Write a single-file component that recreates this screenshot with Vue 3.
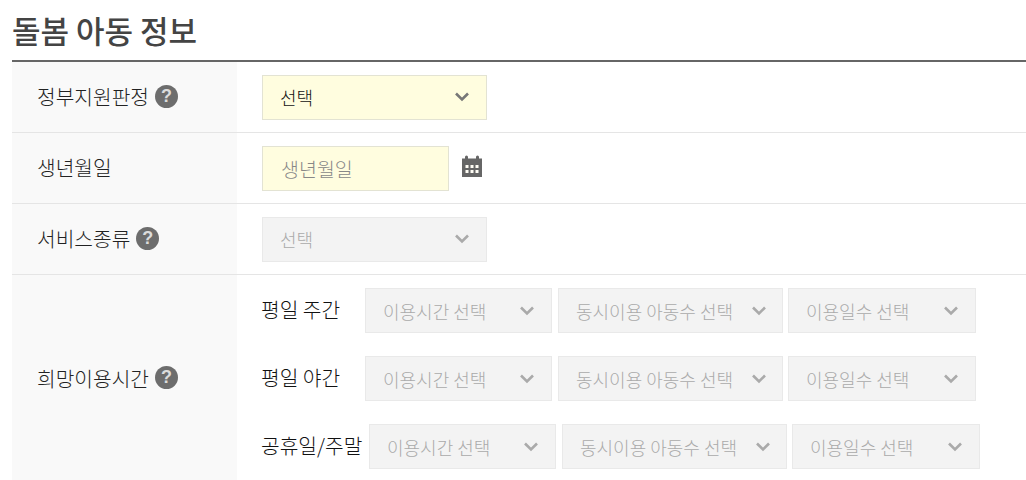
<script setup>
const times = [
  { label: '평일 주간' },
  { label: '평일 야간' },
  { label: '공휴일/주말', wide: true },
]

const selects = [
  { text: '이용시간 선택', size: 'sm' },
  { text: '동시이용 아동수 선택', size: 'lg' },
  { text: '이용일수 선택', size: 'md' },
]
</script>

<template>
  <main class="page">
    <h2 class="title">돌봄 아동 정보</h2>

    <section class="form">
      <div class="row">
        <div class="head">
          <span>정부지원판정</span>
          <i class="help">?</i>
        </div>
        <div class="body">
          <div class="select required big">
            <span>선택</span>
            <svg class="arrow" viewBox="0 0 14 10"><path d="M1 1.500 7 7.500 13 1.500" /></svg>
          </div>
        </div>
      </div>

      <div class="row">
        <div class="head">
          <span>생년월일</span>
        </div>
        <div class="body birth">
          <div class="date">생년월일</div>
          <svg class="calendar" viewBox="0 0 20 22">
            <path d="M0 3.500h3V2a1.500 1.500 0 0 1 3 0v1.500h8V2a1.500 1.500 0 0 1 3 0v1.500h3V22H0z" />
            <g class="dots">
              <rect x="3.500" y="10" width="3" height="3" />
              <rect x="8.500" y="10" width="3" height="3" />
              <rect x="13.500" y="10" width="3" height="3" />
              <rect x="3.500" y="15" width="3" height="3" />
              <rect x="8.500" y="15" width="3" height="3" />
              <rect x="13.500" y="15" width="3" height="3" />
            </g>
          </svg>
        </div>
      </div>

      <div class="row">
        <div class="head">
          <span>서비스종류</span>
          <i class="help">?</i>
        </div>
        <div class="body">
          <div class="select disabled big">
            <span>선택</span>
            <svg class="arrow" viewBox="0 0 14 10"><path d="M1 1.500 7 7.500 13 1.500" /></svg>
          </div>
        </div>
      </div>

      <div class="row last">
        <div class="head">
          <span>희망이용시간</span>
          <i class="help">?</i>
        </div>
        <div class="body times">
          <div v-for="time in times" :key="time.label" class="time-row">
            <span class="time-label" :class="{ wide: time.wide }">{{ time.label }}</span>
            <div
              v-for="item in selects"
              :key="item.text"
              class="select disabled small"
              :class="item.size"
            >
              <span>{{ item.text }}</span>
              <svg class="arrow" viewBox="0 0 14 10"><path d="M1 1.500 7 7.500 13 1.500" /></svg>
            </div>
          </div>
        </div>
      </div>
    </section>
  </main>
</template>

<style>
html,
body {
  overflow: hidden;
  background: #fff;
}
</style>

<style scoped>
.page {
  height: 480px;
  overflow: hidden;
  padding-left: 12px;
  font-family: "Noto Sans CJK KR", "Noto Sans", sans-serif;
  font-weight: 300;
  color: #333;
}

.title {
  margin: 0;
  height: 60px;
  font-size: 31px;
  line-height: 59px;
  font-weight: 500;
  color: #444;
}

.form {
  border-top: 2px solid #666;
}

.row {
  display: flex;
  height: 71px;
  box-sizing: border-box;
  border-bottom: 1px solid #e5e5e5;
}

.row.last {
  height: auto;
  border-bottom: 0;
}

.head {
  display: flex;
  align-items: center;
  gap: 6px;
  width: 225px;
  padding-left: 25px;
  padding-bottom: 2px;
  box-sizing: border-box;
  background: #f9f9f9;
  font-size: 20.300px;
  color: #222;
}

.help {
  display: flex;
  align-items: center;
  justify-content: center;
  width: 23px;
  height: 23px;
  border-radius: 50%;
  background: #6d6d6d;
  color: #dcdcdc;
  font-family: "Liberation Sans", sans-serif;
  font-size: 18px;
  font-weight: 700;
  font-style: normal;
}

.body {
  display: flex;
  align-items: center;
  flex: 1;
  padding-left: 25px;
}

.select {
  display: flex;
  align-items: center;
  justify-content: space-between;
  height: 45px;
  box-sizing: border-box;
  font-size: 18px;
}

.select.big {
  width: 225px;
  padding: 0 17px;
}

.select.required {
  background: #fffddf;
  border: 1px solid #e3e3d3;
  color: #111;
}

.select.disabled {
  background: #f3f3f3;
  border: 1px solid #e9e9e9;
  color: #aaa;
}

.select.small {
  padding: 0 17px;
  margin-right: 5px;
}

.select.sm {
  width: 187px;
  margin-right: 6px;
}

.select.lg {
  width: 225px;
  padding-right: 16px;
}

.select.md {
  width: 188px;
  margin-right: 0;
}

.arrow {
  width: 14px;
  height: 10px;
  fill: none;
  stroke: #777;
  stroke-width: 2.600;
}

.disabled .arrow {
  stroke: #aaa;
}

.birth {
  gap: 13px;
}

.date {
  display: flex;
  align-items: center;
  width: 187px;
  height: 45px;
  box-sizing: border-box;
  padding-left: 18px;
  background: #fffddf;
  border: 1px solid #e3e3d3;
  font-size: 19.500px;
  color: #888;
}

.calendar {
  width: 20px;
  height: 22px;
  margin-bottom: 4px;
  fill: #666;
}

.dots rect {
  fill: #fffdf5;
}

.times {
  flex-direction: column;
  align-items: flex-start;
  gap: 23px;
  padding-top: 13px;
  padding-bottom: 13px;
}

.time-row {
  display: flex;
  align-items: center;
}

.time-label {
  width: 97px;
  margin-right: 7px;
  margin-top: -4px;
  margin-left: -1px;
  white-space: nowrap;
  font-size: 20.300px;
  color: #111;
}

.time-label.wide {
  width: 101px;
}
</style>
